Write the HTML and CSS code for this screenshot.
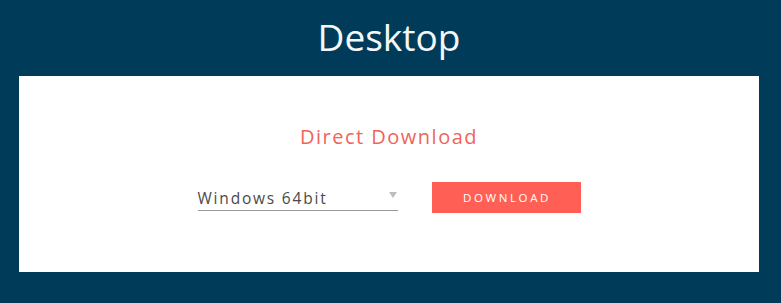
FILE: index.html
```html
<!DOCTYPE html>
<html lang="en">
<head>
  <meta charset="UTF-8">
  <meta name="viewport" content="width=device-width, initial-scale=1.0">
  <title>Desktop</title>
  <link rel="stylesheet" href="styles.css">
</head>
<body>

  <h1 class="title">Desktop</h1>

  <div class="card">
    <h2 class="card-title">Direct Download</h2>
    <div class="download-row">
      <div class="select">
        <span class="select-value">Windows 64bit</span>
        <span class="select-arrow"></span>
      </div>
      <button class="download-btn">DOWNLOAD</button>
    </div>
  </div>

</body>
</html>
```

FILE: styles.css
```css
body {
  margin: 0;
  background-color: #003c5a;
  font-family: "Open Sans", sans-serif;
  height: 303px;
  padding: 0 22px 0 19px;
  box-sizing: border-box;
}
.title {
  margin: 0;
  padding-top: 12px;
  height: 76px;
  box-sizing: border-box;
  text-align: center;
  color: #f4f7f9;
  font-size: 37px;
  font-weight: 400;
  line-height: 50px;
}
.card {
  background-color: #fff;
  height: 196px;
  padding-top: 47px;
  box-sizing: border-box;
}
.card-title {
  margin: 0;
  text-align: center;
  color: #f0645a;
  font-size: 20px;
  font-weight: 400;
  letter-spacing: 1.5px;
  line-height: 28px;
}
.download-row {
  display: flex;
  justify-content: center;
  align-items: flex-start;
  gap: 34px;
  margin-top: 31px;
}
.select {
  width: 200px;
  height: 29px;
  border-bottom: 1px solid #9a9a9a;
  display: flex;
  justify-content: space-between;
  align-items: flex-start;
  box-sizing: border-box;
}
.select-value {
  color: #4a4a4a;
  font-size: 15.5px;
  letter-spacing: 1.8px;
  line-height: 20px;
  padding-top: 6px;
}
.select-arrow {
  margin-top: 10px;
  margin-right: 1px;
  width: 0;
  height: 0;
  border-left: 4px solid transparent;
  border-right: 4px solid transparent;
  border-top: 6px solid #bdbdbd;
}
.download-btn {
  width: 149px;
  height: 31px;
  background-color: #ff5f55;
  color: #fff;
  border: none;
  font-family: "Open Sans", sans-serif;
  font-size: 11.5px;
  letter-spacing: 2.6px;
  padding: 0 0 0 2px;
  cursor: pointer;
}
```
